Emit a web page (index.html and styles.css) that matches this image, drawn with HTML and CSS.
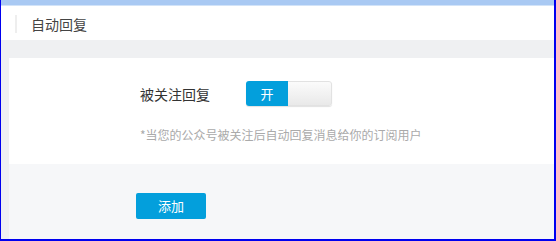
FILE: index.html
```html
<!DOCTYPE html>
<html lang="zh-CN">
<head>
    <meta charset="UTF-8">
    <meta name="viewport" content="width=device-width, initial-scale=1.0">
    <title>自动回复</title>
    <link rel="stylesheet" href="styles.css">
</head>
<body>
    <div class="frame">
        <div class="topbar"></div>
        <div class="header">
            <span class="title">自动回复</span>
        </div>

        <div class="main">
            <div class="card">
                <div class="row">
                    <label class="row-label">被关注回复</label>
                    <div class="switch">
                        <span class="switch-on">开</span>
                        <span class="switch-off"></span>
                    </div>
                </div>
                <p class="tip">*当您的公众号被关注后自动回复消息给你的订阅用户</p>
            </div>

            <div class="footer">
                <button class="btn">添加</button>
            </div>
        </div>
    </div>
</body>
</html>
```

FILE: styles.css
```css
* { box-sizing: border-box; }
body { margin: 0; font-family: "Noto Sans CJK SC", "Liberation Sans", sans-serif; color: #333; }
.frame { width: 556px; height: 241px; border-left: 1px solid #0000f0; border-right: 2px solid #0000f0; border-bottom: 2px solid #0000f0; display: flex; flex-direction: column; overflow: hidden; }
.topbar { height: 6px; background: #a9c9f3; border-bottom: 1px solid #d2e3f8; }
.header { height: 34px; background: #fff; padding-left: 14px; }
.title { display: inline-block; margin-top: 9px; line-height: 18px; height: 18px; padding-left: 14px; border-left: 2px solid #eeeeee; font-size: 14px; color: #444; }
.main { flex: 1; background: #eff0f2; padding: 18px 0 0 8px; display: flex; flex-direction: column; }
.card { background: #fff; height: 106px; padding: 23px 0 0 131px; }
.row { display: flex; align-items: center; height: 25px; }
.row-label { font-size: 14px; margin-right: 36px; color: #333; }
.switch { display: flex; width: 86px; height: 25px; border-radius: 3px; overflow: hidden; box-shadow: 0 1px 1px rgba(0,0,0,0.12); }
.switch-on { width: 42px; background: #039fdc; color: #fff; font-size: 13px; line-height: 25px; text-align: center; }
.switch-off { flex: 1; background: linear-gradient(#fbfbfb, #e9e9e9); border: 1px solid #e2e2e2; border-left: none; border-radius: 0 3px 3px 0; }
.tip { margin: 20px 0 0; font-size: 12px; line-height: 18px; color: #aaa; }
.footer { flex: 1; background: #f6f7f9; padding: 28px 0 0 127px; }
.btn { width: 70px; height: 26px; border: none; border-radius: 2px; background: #039fdc; color: #fff; font-family: inherit; font-size: 13px; padding: 0; cursor: pointer; }
```
